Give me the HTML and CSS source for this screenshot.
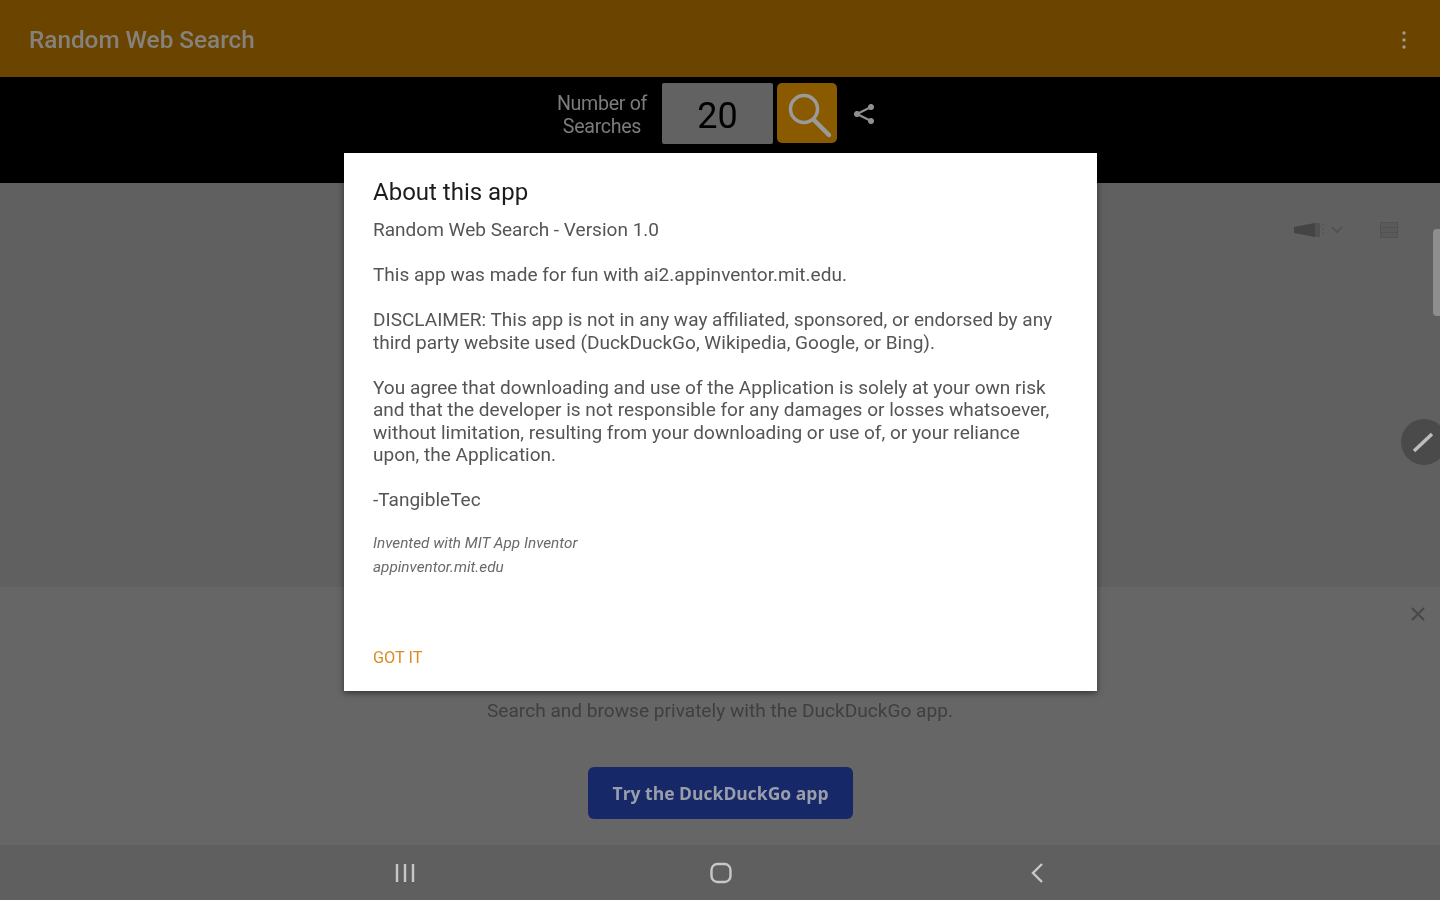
FILE: index.html
```html
<!DOCTYPE html>
<html lang="en">
<head>
    <meta charset="UTF-8">
    <meta name="viewport" content="width=device-width, initial-scale=1.0">
    <title>Random Web Search</title>
    <link rel="stylesheet" href="styles.css">
</head>
<body>

    <header class="appbar">
        <h1 class="app-title">Random Web Search</h1>
        <svg class="overflow-icon" width="6" height="20" viewBox="0 0 6 20"><circle cx="3" cy="3" r="1.7"/><circle cx="3" cy="10" r="1.7"/><circle cx="3" cy="17" r="1.7"/></svg>
    </header>

    <section class="toolbar">
        <div class="count-label">Number of<br>Searches</div>
        <div class="count-box">20</div>
        <button class="search-btn" type="button">
            <svg width="50" height="50" viewBox="0 0 50 50" fill="none" stroke="#9a9a9a"><circle cx="20" cy="20" r="13.5" stroke-width="3.5"/><path d="M30 31l15 15" stroke-width="4.5" stroke-linecap="round"/></svg>
        </button>
        <svg class="share-icon" width="24" height="24" viewBox="0 0 24 24" fill="#8f8f8f" stroke="#8f8f8f"><path d="M19 5L5 12l14 7" fill="none" stroke-width="2.2"/><circle cx="19" cy="5" r="2.6"/><circle cx="5" cy="12" r="2.6"/><circle cx="19" cy="19" r="2.6"/></svg>
    </section>

    <main class="content">
        <div class="page-tools">
            <svg width="34" height="18" viewBox="0 0 34 18" fill="#444"><path d="M1 6l21-4v14L1 12z"/><path d="M22 2h5v14h-5z" fill="#525252"/><path d="M30 3v12" stroke="#585858" stroke-width="2" stroke-dasharray="2 2"/></svg>
            <svg class="chevron" width="14" height="10" viewBox="0 0 14 10" fill="none" stroke="#505050" stroke-width="1.6"><path d="M2 2l5 5 5-5"/></svg>
            <svg class="menu-icon" width="20" height="18" viewBox="0 0 20 18" fill="#5a5a5a" stroke="#525252"><rect x="1.5" y="1.5" width="17" height="15"/><path d="M1.5 6.5h17M1.5 11.5h17"/></svg>
        </div>
        <div class="scroll-thumb"></div>
        <div class="fab">
            <svg width="46" height="46" viewBox="0 0 46 46" fill="none" stroke="#bdbdbd" stroke-width="3.5"><path d="M13 32l18-17"/></svg>
        </div>
    </main>

    <section class="banner">
        <svg class="banner-close" width="16" height="16" viewBox="0 0 16 16" stroke="#484848" stroke-width="2"><path d="M2 2l12 12M14 2L2 14"/></svg>
        <p class="banner-text">Search and browse privately with the DuckDuckGo app.</p>
        <button class="try-btn" type="button">Try the DuckDuckGo app</button>
    </section>

    <nav class="navbar">
        <svg width="22" height="20" viewBox="0 0 22 20" stroke="#c8c8c8" stroke-width="2.4"><path d="M3 1v18M11 1v18M19 1v18"/></svg>
        <svg class="home-icon" width="24" height="24" viewBox="0 0 24 24" fill="none" stroke="#c8c8c8" stroke-width="2.4"><rect x="2.5" y="3" width="19" height="18" rx="6"/></svg>
        <svg width="16" height="24" viewBox="0 0 16 24" fill="none" stroke="#c8c8c8" stroke-width="2.4"><path d="M12 3L3 12l9 9"/></svg>
    </nav>

    <div class="dialog">
        <h2 class="dialog-title">About this app</h2>
        <p class="dialog-text">Random Web Search - Version 1.0<br><br>This app was made for fun with ai2.appinventor.mit.edu.<br><br>DISCLAIMER: This app is not in any way affiliated, sponsored, or endorsed by any<br>third party website used (DuckDuckGo, Wikipedia, Google, or Bing).<br><br>You agree that downloading and use of the Application is solely at your own risk<br>and that the developer is not responsible for any damages or losses whatsoever,<br>without limitation, resulting from your downloading or use of, or your reliance<br>upon, the Application.<br><br>-TangibleTec</p>
        <p class="dialog-credit">Invented with MIT App Inventor<br>appinventor.mit.edu</p>
        <button class="got-it" type="button">GOT IT</button>
    </div>

</body>
</html>
```

FILE: styles.css
```css
body {
    font-family: Roboto, "Liberation Sans", sans-serif;
    background-color: #606060;
    margin: 0;
    height: 900px;
    overflow: hidden;
    display: flex;
    flex-direction: column;
    filter: blur(0.6px);
}

.appbar {
    height: 77px;
    background-color: #6b4500;
    display: flex;
    align-items: center;
    justify-content: space-between;
    padding: 2px 33px 0 29px;
    box-sizing: border-box;
    flex-shrink: 0;
}

.app-title {
    margin: 0;
    font-size: 24.3px;
    font-weight: 500;
    color: #85827b;
}

.overflow-icon {
    fill: #a09a90;
}

.toolbar {
    height: 106px;
    background-color: #000;
    display: flex;
    justify-content: center;
    align-items: flex-start;
    padding: 6px 12px 0 0;
    box-sizing: border-box;
    flex-shrink: 0;
}

.count-label {
    width: 100px;
    margin: 9px 10px 0 0;
    font-size: 19.6px;
    line-height: 23px;
    text-align: center;
    color: #7c7c7c;
    letter-spacing: -0.3px;
}

.count-box {
    width: 111px;
    height: 61px;
    background-color: #626262;
    border-radius: 2px;
    color: #000;
    font-size: 36px;
    line-height: 67px;
    text-align: center;
}

.search-btn {
    width: 60px;
    height: 60px;
    margin-left: 4px;
    padding: 2px 0 0 3px;
    border: none;
    border-radius: 5px;
    background-color: #8a5a00;
    display: flex;
    align-items: center;
    justify-content: center;
}

.share-icon {
    margin: 19px 0 0 15px;
}

.content {
    height: 404px;
    position: relative;
    background-color: #606060;
    flex-shrink: 0;
}

.page-tools {
    position: absolute;
    top: 38px;
    right: 41px;
    display: flex;
    align-items: center;
}

.chevron {
    margin-left: 3px;
}

.menu-icon {
    margin-left: 35px;
}

.scroll-thumb {
    position: absolute;
    top: 46px;
    right: 0;
    width: 7px;
    height: 87px;
    background-color: #8e8e8e;
    border-radius: 4px 0 0 4px;
}

.fab {
    position: absolute;
    top: 236px;
    left: 1401px;
    width: 46px;
    height: 46px;
    border-radius: 50%;
    background-color: #4a4a4a;
}

.banner {
    height: 258px;
    position: relative;
    background-color: #666;
    box-sizing: border-box;
    padding-top: 113px;
    text-align: center;
    flex-shrink: 0;
}

.banner-close {
    position: absolute;
    top: 19px;
    right: 14px;
}

.banner-text {
    margin: 0;
    font-size: 19.1px;
    line-height: 22px;
    color: #3f3f3f;
}

.try-btn {
    display: block;
    width: 265px;
    height: 52px;
    margin: 45px 0 0 588px;
    border: none;
    border-radius: 6px;
    background-color: #172868;
    color: #9a9eaa;
    font-family: "Open Sans", sans-serif;
    font-size: 17.5px;
    font-weight: 700;
}

.navbar {
    height: 55px;
    background-color: #5f5f5f;
    display: flex;
    align-items: center;
    justify-content: space-between;
    padding: 0 394px;
    flex-shrink: 0;
}

.home-icon {
    margin-left: -4px;
}

.dialog {
    position: absolute;
    top: 153px;
    left: 344px;
    width: 753px;
    height: 538px;
    box-sizing: border-box;
    padding: 25px 29px 0;
    background-color: #fff;
    box-shadow: 0 2px 6px rgba(0, 0, 0, 0.5);
}

.dialog-title {
    margin: 0 0 13px 0;
    font-size: 24px;
    line-height: 28px;
    font-weight: 400;
    color: #1c1c1c;
}

.dialog-text {
    margin: 0;
    font-size: 19.05px;
    line-height: 22.5px;
    color: #555;
    white-space: nowrap;
}

.dialog-credit {
    margin: 19px 0 0 0;
    font-size: 15.3px;
    line-height: 24px;
    font-style: italic;
    color: #6a6a6a;
}

.got-it {
    display: block;
    margin: 68px 0 0 0;
    padding: 0;
    border: none;
    background: none;
    font-family: inherit;
    font-size: 16.3px;
    line-height: 22px;
    color: #dd8a1e;
}
```
